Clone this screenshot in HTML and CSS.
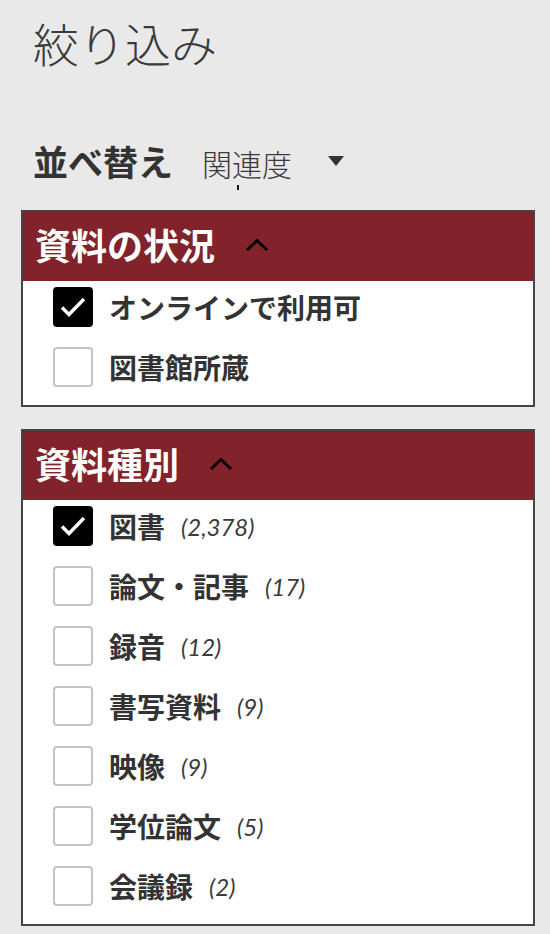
FILE: index.html
```html
<!DOCTYPE html>
<html lang="ja">
  <head>
    <meta charset="utf-8">
    <title>絞り込み</title>
    <link rel="stylesheet" href="styles.css">
  </head>
  <body>
    <div id="facets">
      <h1 class="title">絞り込み</h1>

      <div class="sort">
        <span class="sort-label">並べ替え</span>
        <span class="sort-select">
          関連度
          <span class="caret"></span>
        </span>
        <span class="sort-arrow"></span>
      </div>

      <!-- 資料の状況 -->
      <div class="panel">
        <div class="panel-head">
          <span>資料の状況</span>
          <svg class="chevron" width="24" height="14" viewBox="0 0 24 14"><polyline points="2,12 12,2.5 22,12" fill="none" stroke="#000" stroke-width="3"/></svg>
        </div>
        <div class="panel-body">
          <input type="checkbox" id="a1" checked><label for="a1"><span class="box"><svg width="40" height="40" viewBox="0 0 40 40"><polyline points="9,20.5 16,27.5 31,12" fill="none" stroke="#fff" stroke-width="3.5"/></svg></span>オンラインで利用可</label>
          <input type="checkbox" id="a2"><label for="a2"><span class="box"><svg width="40" height="40" viewBox="0 0 40 40"><polyline points="9,20.5 16,27.5 31,12" fill="none" stroke="#fff" stroke-width="3.5"/></svg></span>図書館所蔵</label>
        </div>
      </div>

      <!-- 資料種別 -->
      <div class="panel">
        <div class="panel-head">
          <span>資料種別</span>
          <svg class="chevron" width="24" height="14" viewBox="0 0 24 14"><polyline points="2,12 12,2.5 22,12" fill="none" stroke="#000" stroke-width="3"/></svg>
        </div>
        <div class="panel-body">
          <input type="checkbox" id="b1" checked><label for="b1"><span class="box"><svg width="40" height="40" viewBox="0 0 40 40"><polyline points="9,20.5 16,27.5 31,12" fill="none" stroke="#fff" stroke-width="3.5"/></svg></span>図書<span class="count">(2,378)</span></label>
          <input type="checkbox" id="b2"><label for="b2"><span class="box"><svg width="40" height="40" viewBox="0 0 40 40"><polyline points="9,20.5 16,27.5 31,12" fill="none" stroke="#fff" stroke-width="3.5"/></svg></span>論文・記事<span class="count">(17)</span></label>
          <input type="checkbox" id="b3"><label for="b3"><span class="box"><svg width="40" height="40" viewBox="0 0 40 40"><polyline points="9,20.5 16,27.5 31,12" fill="none" stroke="#fff" stroke-width="3.5"/></svg></span>録音<span class="count">(12)</span></label>
          <input type="checkbox" id="b4"><label for="b4"><span class="box"><svg width="40" height="40" viewBox="0 0 40 40"><polyline points="9,20.5 16,27.5 31,12" fill="none" stroke="#fff" stroke-width="3.5"/></svg></span>書写資料<span class="count">(9)</span></label>
          <input type="checkbox" id="b5"><label for="b5"><span class="box"><svg width="40" height="40" viewBox="0 0 40 40"><polyline points="9,20.5 16,27.5 31,12" fill="none" stroke="#fff" stroke-width="3.5"/></svg></span>映像<span class="count">(9)</span></label>
          <input type="checkbox" id="b6"><label for="b6"><span class="box"><svg width="40" height="40" viewBox="0 0 40 40"><polyline points="9,20.5 16,27.5 31,12" fill="none" stroke="#fff" stroke-width="3.5"/></svg></span>学位論文<span class="count">(5)</span></label>
          <input type="checkbox" id="b7"><label for="b7"><span class="box"><svg width="40" height="40" viewBox="0 0 40 40"><polyline points="9,20.5 16,27.5 31,12" fill="none" stroke="#fff" stroke-width="3.5"/></svg></span>会議録<span class="count">(2)</span></label>
        </div>
      </div>
    </div>
  </body>
</html>
```

FILE: styles.css
```css
body {
  margin: 0;
  background-color: #e9e9e9;
  color: #333;
  font-family: "Noto Sans CJK JP", sans-serif;
}

#facets {
  padding: 0 15px 0 21px;
}

.title {
  margin: 0 0 0 12px;
  height: 84px;
  font-size: 46px;
  line-height: 84px;
  font-weight: 300;
  color: #3a3a3a;
}

.sort {
  display: flex;
  align-items: baseline;
  height: 50px;
  margin: 52px 0 24px 12px;
  line-height: 50px;
}

.sort-label {
  font-size: 35px;
  font-weight: bold;
}

.sort-select {
  position: relative;
  margin-left: 29px;
  font-size: 30px;
  font-weight: 300;
  color: #3a3a3a;
}

/* text cursor under the select */
.caret {
  position: absolute;
  left: 35px;
  top: 47px;
  width: 2px;
  height: 5px;
  background: #111;
}

.sort-arrow {
  align-self: center;
  margin-left: 36px;
  width: 0;
  height: 0;
  border-left: 8.5px solid transparent;
  border-right: 8.5px solid transparent;
  border-top: 10px solid #333;
}

.panel {
  border: 2px solid #444;
  background: #fff;
  margin-bottom: 22px;
}

.panel-head {
  display: flex;
  align-items: center;
  height: 69px;
  box-sizing: border-box;
  padding: 0 0 5px 12px;
  background: #82232b;
  color: #fff;
  font-size: 36px;
  font-weight: bold;
  line-height: 1;
}

.chevron {
  margin-left: 30px;
  margin-top: 2px;
}

.panel-body {
  display: flex;
  flex-direction: column;
  gap: 8px;
  padding: 0 0 12px 30px;
}

.panel-body label {
  display: flex;
  align-items: center;
  height: 52px;
  font-size: 28px;
  font-weight: bold;
  color: #333;
  cursor: pointer;
}

input[type="checkbox"] {
  display: none;
}

.box {
  width: 40px;
  height: 40px;
  box-sizing: border-box;
  margin-right: 16px;
  border: 2px solid #c4c4c4;
  border-radius: 4px;
  background: #fff;
  flex: none;
}

.box svg {
  display: none;
  margin: -2px;
}

input[type="checkbox"]:checked + label .box {
  border-color: #000;
  background: #000;
}

input[type="checkbox"]:checked + label .box svg {
  display: block;
}

.count {
  margin-left: 16px;
  font-family: Lato, "Open Sans", sans-serif;
  font-size: 24px;
  font-style: italic;
  font-weight: normal;
  color: #3a3a3a;
}
```
